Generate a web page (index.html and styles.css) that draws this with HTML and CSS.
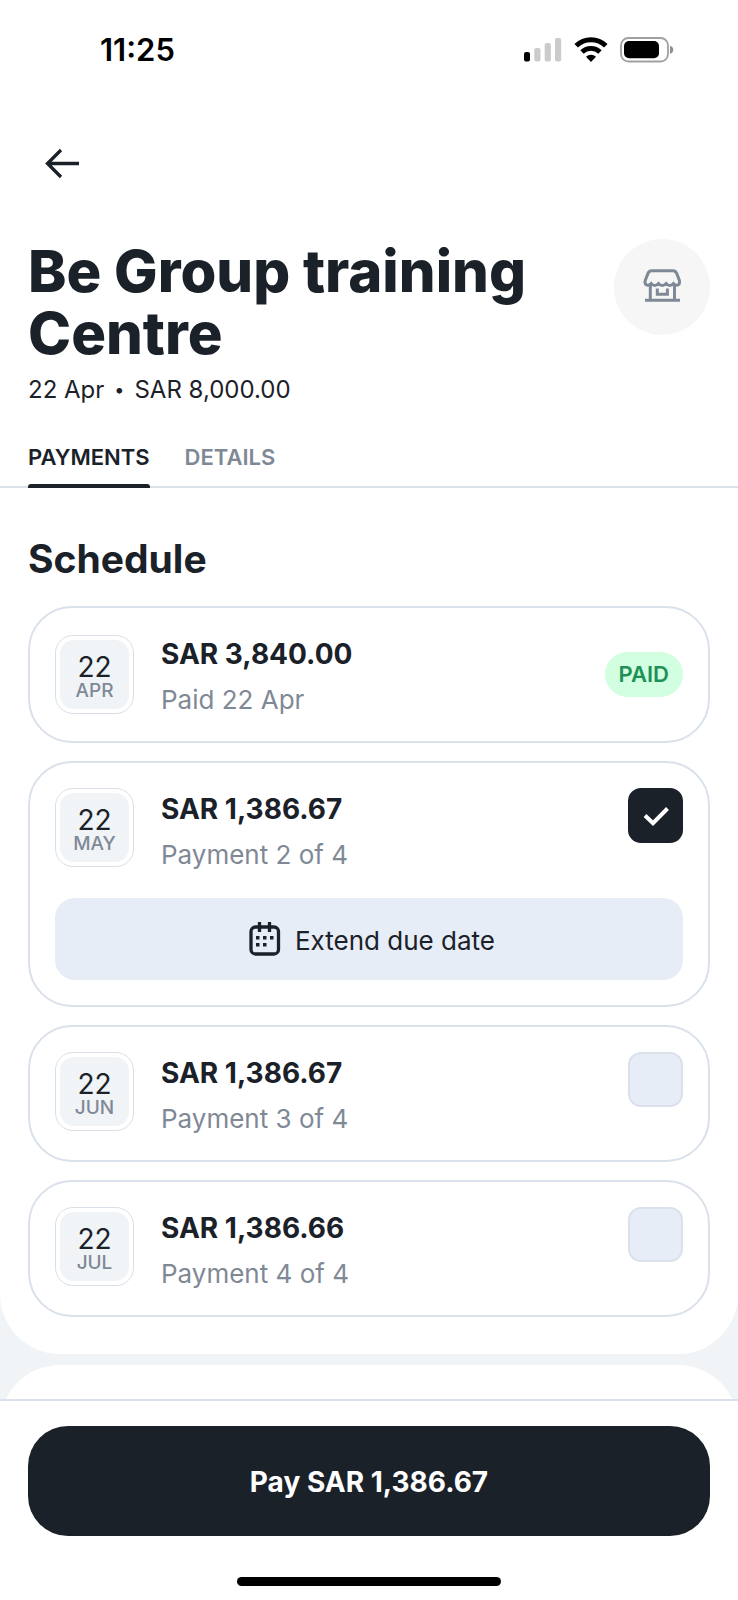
FILE: index.html
```html
<!DOCTYPE html>
<html lang="en">
<head>
<meta charset="utf-8">
<meta name="viewport" content="width=device-width, initial-scale=1">
<title>Be Group training Centre</title>
<link rel="stylesheet" href="styles.css">
</head>
<body>
<div class="screen">
  <section class="panel panel-main">
    <div class="status">
      <span class="status-time">11:25</span>
      <div class="status-icons">
        <svg width="38" height="26" viewBox="0 0 38 26" aria-hidden="true">
          <rect x="0" y="15" width="6" height="9.500" rx="2" fill="#000"/>
          <rect x="10.300" y="11" width="6.200" height="13.500" rx="2" fill="#cbcbcb"/>
          <rect x="20.700" y="6" width="6.200" height="18.500" rx="2" fill="#cbcbcb"/>
          <rect x="31" y="1" width="6.200" height="23.500" rx="2" fill="#cbcbcb"/>
        </svg>
        <svg width="34" height="26" viewBox="0 0 34 26" aria-hidden="true">
          <path d="M2.200 8.800a21 21 0 0 1 29.600 0" fill="none" stroke="#000" stroke-width="5"/>
          <path d="M8 15a12.800 12.800 0 0 1 18 0" fill="none" stroke="#000" stroke-width="4.800"/>
          <path d="M17 25l-5-5.300a7.400 7.400 0 0 1 10 0z" fill="#000"/>
        </svg>
        <svg width="54" height="26" viewBox="0 0 54 26" aria-hidden="true">
          <rect x="1" y="1" width="47" height="23.500" rx="7.500" fill="none" stroke="#a0a0a0" stroke-width="1.800"/>
          <rect x="4" y="4" width="35" height="17.300" rx="5" fill="#000"/>
          <path d="M50 8.700q3.300 1 3.300 4t-3.300 4z" fill="#909090"/>
        </svg>
      </div>
    </div>

    <nav class="nav">
      <button class="back" type="button" aria-label="Back">
        <svg width="36" height="32" viewBox="0 0 36 32" fill="none" stroke="#1b2129" stroke-width="3.300" aria-hidden="true">
          <path d="M35 16.500H3M17 3L3.500 16.500L17 30"/>
        </svg>
      </button>
    </nav>

    <header class="header">
      <div>
        <h1 class="title">Be Group training Centre</h1>
        <p class="meta"><span>22 Apr</span><span class="dot">•</span><span>SAR 8,000.00</span></p>
      </div>
      <div class="merchant">
        <svg width="40" height="36" viewBox="0 0 40 36" fill="none" stroke="#7f8996" stroke-width="3" aria-hidden="true">
          <path d="M9.500 1.800H31q2.500 0 3.700 2.600L37.200 11Q38.300 14.500 36 16Q34 17 31.500 14.500q-3.700 4-7.400 0q-3.750 4-7.600 0q-3.700 4-7.400 0Q6.500 17 4.500 16Q2.200 14.500 3.400 11L6 4.400Q7 1.800 9.500 1.800z"/>
          <path d="M8.300 16v15M32.500 16v15M3 31.300H38M15.300 19.500v5.700h10.100v-5.700"/>
        </svg>
      </div>
    </header>

    <nav class="tabs">
      <a class="tab tab-active" href="#payments" aria-current="page">PAYMENTS</a>
      <a class="tab" href="#details">DETAILS</a>
    </nav>

    <div class="schedule" id="payments">
      <h2 class="heading">Schedule</h2>
      <article class="card">
        <div class="row row-center">
          <div class="date"><div class="date-in"><span class="day">22</span><span class="month">APR</span></div></div>
          <div class="info"><p class="amount">SAR 3,840.00</p><p class="note">Paid 22 Apr</p></div>
          <span class="badge">PAID</span>
        </div>
      </article>
      <article class="card">
        <div class="row">
          <div class="date"><div class="date-in"><span class="day">22</span><span class="month">MAY</span></div></div>
          <label class="info" for="pay2"><span class="amount">SAR 1,386.67</span><span class="note">Payment 2 of 4</span></label>
          <span class="check">
            <input class="box" type="checkbox" id="pay2" checked>
            <svg class="tick" width="26" height="20" viewBox="0 0 26 20" fill="none" stroke="#fff" stroke-width="4" aria-hidden="true"><path d="M2 9.500L10 17.200L24.500 2.500"/></svg>
          </span>
        </div>
        <button class="extend" type="button">
          <svg width="32" height="34" viewBox="0 0 32 34" fill="none" stroke="#1b2129" stroke-width="3.300" aria-hidden="true">
            <rect x="2" y="5" width="27.500" height="27" rx="4.500"/>
            <path d="M10.500 0v10M20.500 0v10"/>
            <g fill="#1b2129" stroke="none">
              <path d="M7 14h3.500v3.500H7zM14 14h3.500v3.500H14zM21 14h3.500v3.500H21zM7 21h3.500v3.500H7zM14 21h3.500v3.500H14z"/>
            </g>
          </svg>
          <span class="extend-text">Extend due date</span>
        </button>
      </article>
      <article class="card">
        <div class="row">
          <div class="date"><div class="date-in"><span class="day">22</span><span class="month">JUN</span></div></div>
          <label class="info" for="pay3"><span class="amount">SAR 1,386.67</span><span class="note">Payment 3 of 4</span></label>
          <span class="check"><input class="box" type="checkbox" id="pay3"></span>
        </div>
      </article>
      <article class="card">
        <div class="row">
          <div class="date"><div class="date-in"><span class="day">22</span><span class="month">JUL</span></div></div>
          <label class="info" for="pay4"><span class="amount">SAR 1,386.66</span><span class="note">Payment 4 of 4</span></label>
          <span class="check"><input class="box" type="checkbox" id="pay4"></span>
        </div>
      </article>
    </div>
  </section>

  <section class="panel panel-next"></section>

  <footer class="footer">
    <button class="pay" type="button">Pay SAR 1,386.67</button>
    <div class="home"></div>
  </footer>
</div>
</body>
</html>
```

FILE: styles.css
```css
* { box-sizing: border-box; }
body, h1, h2, p { margin: 0; }
body {
  background: #f0f4f7;
  color: #1b2129;
  font-family: Inter, "Liberation Sans", sans-serif;
}
button { border: 0; padding: 0; background: none; color: inherit; font: inherit; cursor: pointer; }
svg { display: block; flex: none; }

.screen { min-height: 100vh; display: flex; flex-direction: column; }
.panel { background: #fff; }
.panel-main { padding-bottom: 37px; border-radius: 0 0 60px 60px; }
.panel-next { flex: 1; min-height: 94px; margin: 11px 0 -60px; border-radius: 60px 60px 0 0; }

.status { display: flex; justify-content: space-between; align-items: center; height: 100px; padding: 0 64px 0 100px; }
.status-time { font-size: 31px; line-height: 36px; font-weight: 600; color: #000; }
.status-icons { display: flex; gap: 12px; }

.nav { display: flex; align-items: center; height: 125px; padding: 0 44px; }
.back { display: block; }

.header { display: flex; justify-content: space-between; gap: 24px; padding: 14px 28px 0; }
.title { max-width: 520px; padding-top: 1px; font-size: 58px; line-height: 62px; font-weight: 800; }
.meta { display: flex; gap: 10px; margin-top: 10px; font-size: 24px; line-height: 32px; }
.dot { font-size: 18px; }
.merchant { display: grid; place-items: center; flex: none; width: 96px; height: 96px; border-radius: 50%; background: #f6f6f6; }

.tabs { display: flex; gap: 35px; margin-top: 37px; padding: 0 28px; box-shadow: inset 0 -2px #dbe2ea; }
.tab { padding-bottom: 13px; border-bottom: 4px solid transparent; color: #7f8996; font-size: 22px; line-height: 28px; font-weight: 600; text-decoration: none; }
.tab-active { position: relative; color: #1b2129; }
.tab-active::after { content: ""; position: absolute; left: 0; right: 0; bottom: -4px; height: 4px; border-radius: 3px 3px 0 0; background: #1b2129; }

.schedule { display: flex; flex-direction: column; gap: 18px; padding: 46px 28px 0; }
.heading { margin-bottom: 4px; font-size: 39px; line-height: 50px; font-weight: 700; }
.card { padding: 25px; border: 2px solid #dae1ea; border-radius: 44px; }
.row { display: flex; align-items: flex-start; gap: 27px; }
.row-center { align-items: center; }

.date { flex: none; width: 79px; height: 79px; padding: 4px; border: 1px solid #d9dfe6; border-radius: 18px; }
.date-in { display: flex; flex-direction: column; align-items: center; height: 100%; padding-top: 13px; border-radius: 14px; background: #f0f4f7; }
.day { font-size: 28px; line-height: 28px; }
.month { font-size: 19px; line-height: 20px; font-weight: 500; color: #7f8996; }

.info { display: flex; flex-direction: column; gap: 11px; flex: 1; padding: 3px 0 1px; }
.amount { font-size: 28px; line-height: 36px; font-weight: 700; }
.note { font-size: 26px; line-height: 34px; margin-bottom: -2px; color: #7f8996; }
.badge { padding: 0 14px; border-radius: 23px; background: #d2ffe0; color: #1f9158; font-size: 22px; line-height: 45px; font-weight: 600; }

.check { display: grid; place-items: center; flex: none; }
.box { appearance: none; grid-area: 1 / 1; width: 55px; height: 55px; margin: 0; border: 2px solid #dae1ea; border-radius: 13px; background: #e7edf6; }
.box:checked { border-color: #1b2129; background: #1b2129; }
.tick { grid-area: 1 / 1; pointer-events: none; }

.extend { display: flex; justify-content: center; align-items: center; gap: 14px; width: 100%; height: 82px; margin-top: 27px; padding-left: 6px; border-radius: 20px; background: #e7edf6; font-size: 26px; line-height: 32px; }
.extend-text { padding-top: 3px; }

.footer { position: relative; padding: 25px 28px 14px; border-top: 2px solid #dae1ea; background: #fff; }
.pay { display: block; width: 100%; height: 110px; padding-top: 2px; border-radius: 40px; background: #1b2129; color: #fff; font-size: 28px; font-weight: 700; }
.home { width: 264px; height: 9px; margin: 41px auto 0; border-radius: 5px; background: #000; }
```
